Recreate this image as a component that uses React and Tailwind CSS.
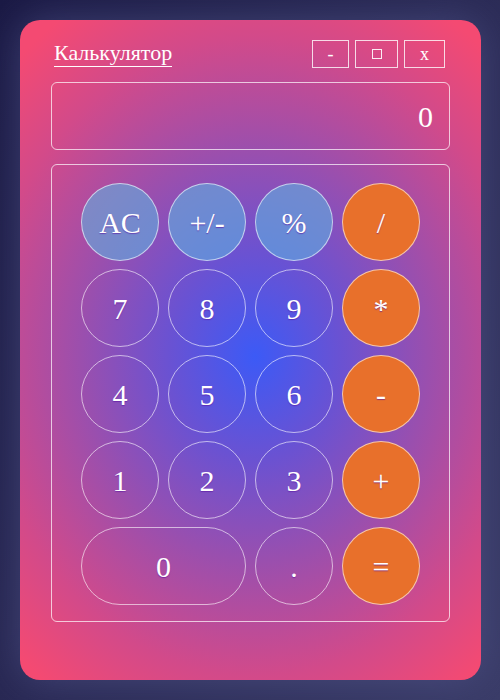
import React from "react";

const serif = { fontFamily: '"Liberation Serif", "Times New Roman", serif' };

function Key({ label, kind = "num", wide = false, small = false }) {
  const base =
    "flex items-center justify-center rounded-full h-[78px] text-[30px] text-white border [text-shadow:0_1px_1px_rgba(90,20,160,0.6)]";
  const kinds = {
    num: "border-white/60 bg-transparent",
    fn: "border-white/60 bg-[#5fb0e0]/60",
    op: "border-white/60 bg-[#e8702b]",
  };
  return (
    <div className={`${base} ${kinds[kind]} ${wide ? "col-span-2" : ""}`}>
      <span className={small ? "text-[26px]" : ""}>{label}</span>
    </div>
  );
}

export default function App() {
  return (
    <div
      className="w-[500px] h-[700px] pt-[20px] pl-[20px] bg-[linear-gradient(120deg,#1a1944_0%,#2a2a55_50%,#3a3c68_100%)]"
      style={serif}
    >
      <div className="w-[461px] h-[660px] rounded-[20px] px-[31px] pt-[20px] bg-[radial-gradient(ellipse_75%_62%_at_51%_51%,#3c5af6_0%,#6a52d2_25%,#9a4fae_50%,#d24a8a_78%,#f44a72_100%)] shadow-[0_0_40px_rgba(90,92,150,0.55)]">
        {/* title row */}
        <div className="flex items-start justify-between h-[28px]">
          <span className="ml-[3px] text-[22px] leading-[26px] text-white border-b border-white">
            Калькулятор
          </span>
          <div className="flex gap-[6px] mr-[5px]">
            <div className="w-[37px] h-[28px] flex items-center justify-center border border-white/80 text-white text-[18px] leading-none">
              -
            </div>
            <div className="w-[43px] h-[28px] flex items-center justify-center border border-white/80 text-white/80 text-[16px] leading-none">
              <span className="block w-[10px] h-[10px] border border-white/90"></span>
            </div>
            <div className="w-[41px] h-[28px] flex items-center justify-center border border-white/80 text-white text-[18px] leading-none">
              x
            </div>
          </div>
        </div>

        {/* display */}
        <div className="mt-[14px] h-[68px] rounded-md border border-white/70 flex items-center justify-end pr-[16px] text-white text-[30px]">
          0
        </div>

        {/* keypad */}
        <div className="mt-[14px] h-[458px] rounded-md border border-white/70 pl-[29px] pt-[18px]">
          <div className="grid grid-cols-[repeat(4,78px)] gap-x-[9px] gap-y-[8px]">
            <Key label="AC" kind="fn" />
            <Key label="+/-" kind="fn" />
            <Key label="%" kind="fn" />
            <Key label="/" kind="op" />
            <Key label="7" />
            <Key label="8" />
            <Key label="9" />
            <Key label="*" kind="op" />
            <Key label="4" />
            <Key label="5" />
            <Key label="6" />
            <Key label="-" kind="op" />
            <Key label="1" />
            <Key label="2" />
            <Key label="3" />
            <Key label="+" kind="op" />
            <Key label="0" wide />
            <Key label="." />
            <Key label="=" kind="op" />
          </div>
        </div>
      </div>
    </div>
  );
}
